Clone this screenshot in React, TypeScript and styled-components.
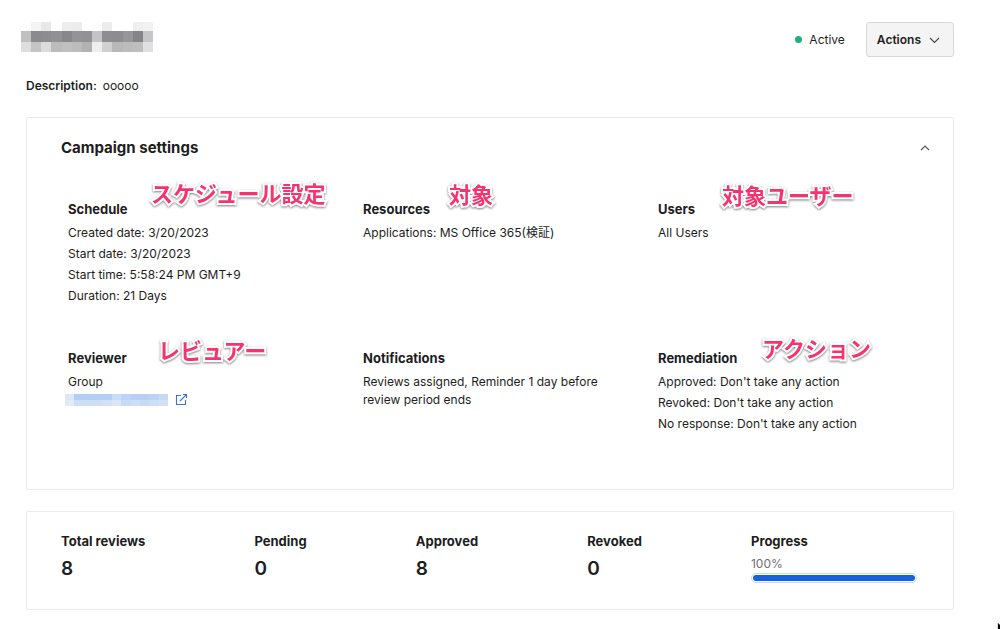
import React from "react";
import styled, { createGlobalStyle } from "styled-components";

const GlobalStyle = createGlobalStyle`
  * { box-sizing: border-box; }
  body {
    margin: 0;
    background: #fff;
    color: #1d1d21;
    font-family: Inter, "Noto Sans CJK JP", sans-serif;
    font-size: 12px;
    line-height: 18px;
    overflow-x: hidden;
  }
  h1, h2, h3, p, dl, dt, dd { margin: 0; }
`;

const Page = styled.main`
  padding: 22px 46px 18px 26px;
`;

const Header = styled.header`
  display: flex;
  align-items: flex-start;
  justify-content: space-between;
`;

const Title = styled.h1`
  display: flex;
  margin-left: -5px;
`;

const HeaderActions = styled.div`
  display: flex;
  align-items: center;
  gap: 21px;
`;

const Status = styled.span`
  display: flex;
  align-items: center;
  gap: 7px;

  &::before {
    content: "";
    width: 7px;
    height: 7px;
    border-radius: 50%;
    background: #22b07d;
  }
`;

const ActionsButton = styled.button`
  display: flex;
  align-items: center;
  gap: 8px;
  height: 35px;
  padding: 1px 13px 0 10px;
  border: 1px solid #d8d8da;
  border-radius: 3px;
  background: #f4f4f4;
  color: inherit;
  font: inherit;
  font-weight: 600;
`;

const Description = styled.p`
  display: flex;
  gap: 6px;
  margin-top: 20px;

  strong {
    font-weight: 600;
  }
`;

const Card = styled.section<{ $gap: number }>`
  margin-top: ${(p) => p.$gap}px;
  border: 1px solid #ebebed;
  border-radius: 2px;
`;

const SettingsHeader = styled.div`
  display: flex;
  align-items: center;
  justify-content: space-between;
  padding: 20px 23px 0 34px;
`;

const CardTitle = styled.h2`
  font-size: 15px;
  line-height: 20px;
  font-weight: 700;
`;

const Toggle = styled.button`
  display: flex;
  padding: 0;
  border: 0;
  background: none;
  color: #55555c;
`;

const SettingsGrid = styled.div`
  display: grid;
  grid-template-columns: repeat(3, 1fr);
  row-gap: 42px;
  padding: 41px 0 34px 41px;
`;

const Setting = styled.section`
  position: relative;
  min-height: 107px;
`;

const SettingTitle = styled.h3`
  font-size: 13px;
  line-height: 20px;
  font-weight: 700;
`;

const Lines = styled.div<{ $compact?: boolean }>`
  margin-top: ${(p) => (p.$compact ? 5 : 3)}px;
  line-height: ${(p) => (p.$compact ? 18 : 21)}px;
  max-width: 240px;
`;

const GroupLink = styled.a`
  display: flex;
  align-items: center;
  gap: 7px;
  margin-top: 1px;
  margin-left: -3px;
`;

const Note = styled.span<{ $x: number; $y: number }>`
  position: absolute;
  left: ${(p) => p.$x}px;
  top: ${(p) => p.$y}px;
  color: #f5336e;
  font-family: "Noto Sans CJK JP", sans-serif;
  font-size: 22px;
  line-height: 32px;
  font-weight: 700;
  white-space: nowrap;
  paint-order: stroke fill;
  -webkit-text-stroke: 4px #fff;
  filter: drop-shadow(0 1px 1px rgba(0, 0, 0, 0.5));
`;

const Stats = styled.dl`
  display: flex;
  justify-content: space-between;
  padding: 19px 36px 19px 34px;
`;

const Stat = styled.div`
  min-height: 59px;
`;

const StatLabel = styled.dt`
  font-size: 13px;
  line-height: 20px;
  font-weight: 700;
`;

const StatValue = styled.dd`
  margin-top: 4px;
  font-size: 19px;
  line-height: 28px;
  font-weight: 600;
`;

const ProgressValue = styled.dd`
  margin-top: 4px;
  width: 166px;
  color: #6e6e78;
`;

const ProgressBar = styled.div`
  height: 10px;
  padding: 1px;
  border: 1px solid #c9dcf5;
  border-radius: 5px;
`;

const ProgressFill = styled.div`
  height: 6px;
  border-radius: 3px;
  background: #1662dd;
`;

const Pointer = styled.svg`
  position: fixed;
  right: 0;
  bottom: 0;
`;

const titleCells = [
  ["#fff", "#f4f4f4", "#e8e8e8", "#fff", "#eee", "#ececec", "#fff", "#fdfdfd", "#ececec", "#fff", "#fff", "#efefef", "#f2f2f2"],
  ["#c0c0c0", "#8b8b8d", "#8d8d8f", "#919193", "#88888a", "#949496", "#929294", "#c4c4c6", "#8e8e90", "#8d8d8f", "#969698", "#858587", "#c6c6c8"],
  ["#dedede", "#c4c4c4", "#dcdcdc", "#bcbcbc", "#c0c0c0", "#bcbcbc", "#b2b2b2", "#eee", "#d0d0d0", "#b8b8b8", "#bcbcbc", "#bebebe", "#e0e0e0"],
];

const linkCells = [
  ["#dce7f8", "#b4cdf2", "#b4cdf2", "#b4cdf2", "#b4cdf2", "#cbdcf6", "#bfd4f4", "#b8cff3", "#b8cff3", "#bcd2f3", "#c6d9f5"],
  ["#e2ebfa", "#cddef7", "#cddef7", "#cddef7", "#d2e1f8", "#dbe7f9", "#c8daf6", "#cddef7", "#c8daf6", "#cddef7", "#d2e1f8"],
];

interface RedactedProps {
  cells: string[][];
  width: number;
  heights: number[];
  label: string;
}

function Redacted({ cells, width, heights, label }: RedactedProps) {
  const tops = heights.map((_, i) => heights.slice(0, i).reduce((a, b) => a + b, 0));
  const total = heights.reduce((a, b) => a + b, 0);
  return (
    <svg
      role="img"
      aria-label={label}
      width={width}
      height={total}
      viewBox={`0 0 ${cells[0].length} ${total}`}
      preserveAspectRatio="none"
      shapeRendering="crispEdges"
    >
      {cells.map((row, r) =>
        row.map((fill, c) => (
          <rect key={`${r}-${c}`} x={c} y={tops[r]} width={1} height={heights[r]} fill={fill} />
        ))
      )}
    </svg>
  );
}

export default function App() {
  return (
    <>
      <GlobalStyle />
      <Page>
        <Header>
          <Title>
            <Redacted cells={titleCells} width={132} heights={[9, 11, 10]} label="Campaign name" />
          </Title>
          <HeaderActions>
            <Status>Active</Status>
            <ActionsButton type="button">
              Actions
              <svg width="11" height="7" viewBox="0 0 11 7" fill="none" stroke="#45454c" strokeWidth="1.1">
                <path d="M1 1l4.5 4.5L10 1" />
              </svg>
            </ActionsButton>
          </HeaderActions>
        </Header>

        <Description>
          <strong>Description:</strong>
          <span>ooooo</span>
        </Description>

        <Card $gap={22}>
          <SettingsHeader>
            <CardTitle>Campaign settings</CardTitle>
            <Toggle type="button" aria-label="Collapse campaign settings">
              <svg width="10" height="6" viewBox="0 0 10 6" fill="none" stroke="currentColor" strokeWidth="1.1">
                <path d="M1 5l4-4 4 4" />
              </svg>
            </Toggle>
          </SettingsHeader>
          <SettingsGrid>
            <Setting>
              <SettingTitle>Schedule</SettingTitle>
              <Note $x={83} $y={-23}>スケジュール設定</Note>
              <Lines>
                <p>Created date: 3/20/2023</p>
                <p>Start date: 3/20/2023</p>
                <p>Start time: 5:58:24 PM GMT+9</p>
                <p>Duration: 21 Days</p>
              </Lines>
            </Setting>
            <Setting>
              <SettingTitle>Resources</SettingTitle>
              <Note $x={86} $y={-22}>対象</Note>
              <Lines>
                <p>Applications: MS Office 365(検証)</p>
              </Lines>
            </Setting>
            <Setting>
              <SettingTitle>Users</SettingTitle>
              <Note $x={64} $y={-21}>対象ユーザー</Note>
              <Lines>
                <p>All Users</p>
              </Lines>
            </Setting>
            <Setting>
              <SettingTitle>Reviewer</SettingTitle>
              <Note $x={90} $y={-15}>レビュアー</Note>
              <Lines>
                <p>Group</p>
                <GroupLink href="#group">
                  <Redacted cells={linkCells} width={103} heights={[6, 6]} label="Group name" />
                  <svg width="13" height="13" viewBox="0 0 13 13" fill="none" stroke="#3a74d0" strokeWidth="1.1">
                    <path d="M6 2.500H1.500v9h9V7M5 8l6.500-6.500M8 1.500h3.500V5" />
                  </svg>
                </GroupLink>
              </Lines>
            </Setting>
            <Setting>
              <SettingTitle>Notifications</SettingTitle>
              <Lines $compact>
                <p>Reviews assigned, Reminder 1 day before review period ends</p>
              </Lines>
            </Setting>
            <Setting>
              <SettingTitle>Remediation</SettingTitle>
              <Note $x={104} $y={-17}>アクション</Note>
              <Lines>
                <p>Approved: Don't take any action</p>
                <p>Revoked: Don't take any action</p>
                <p>No response: Don't take any action</p>
              </Lines>
            </Setting>
          </SettingsGrid>
        </Card>

        <Card $gap={21}>
          <Stats>
            <Stat>
              <StatLabel>Total reviews</StatLabel>
              <StatValue>8</StatValue>
            </Stat>
            <Stat>
              <StatLabel>Pending</StatLabel>
              <StatValue>0</StatValue>
            </Stat>
            <Stat>
              <StatLabel>Approved</StatLabel>
              <StatValue>8</StatValue>
            </Stat>
            <Stat>
              <StatLabel>Revoked</StatLabel>
              <StatValue>0</StatValue>
            </Stat>
            <Stat>
              <StatLabel id="progress-label">Progress</StatLabel>
              <ProgressValue>
                100%
                <ProgressBar role="progressbar" aria-labelledby="progress-label" aria-valuenow={100}>
                  <ProgressFill style={{ width: "100%" }} />
                </ProgressBar>
              </ProgressValue>
            </Stat>
          </Stats>
        </Card>
      </Page>
      <Pointer width="3" height="6" viewBox="0 0 3 6" aria-hidden="true">
        <path d="M0 0v6" stroke="#bbb" />
        <path d="M1 0l2 2v4H1z" fill="#000" />
      </Pointer>
    </>
  );
}
